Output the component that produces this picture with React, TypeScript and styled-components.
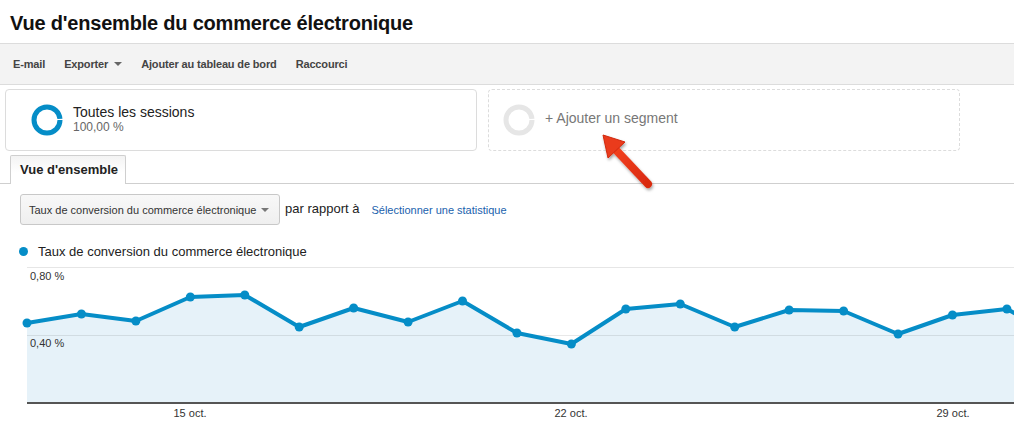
import React from 'react';
import styled, { createGlobalStyle } from 'styled-components';

const GlobalStyle = createGlobalStyle`
    html, body {
        margin: 0;
        padding: 0;
        background: #fff;
        font-family: 'Liberation Sans', Arial, sans-serif;
        color: #222;
    }
`;

const Page = styled.div`
    position: relative;
    width: 1014px;
    height: 424px;
    overflow: hidden;
`;

const Title = styled.h1`
    margin: 0;
    height: 43px;
    box-sizing: border-box;
    padding: 11px 0 0 10px;
    font-size: 20px;
    line-height: 24px;
    font-weight: bold;
    color: #111;
    letter-spacing: -0.2px;
`;

const Toolbar = styled.div`
    display: flex;
    align-items: center;
    gap: 19px;
    height: 40px;
    padding-left: 13px;
    background: #f3f3f3;
    border-top: 1px solid #dcdcdc;
    border-bottom: 1px solid #dcdcdc;
`;

const ToolItem = styled.span`
    display: flex;
    align-items: center;
    gap: 6px;
    font-size: 11px;
    font-weight: bold;
    letter-spacing: -0.15px;
    color: #444;
`;

const Caret = styled.span<{ $color?: string }>`
    width: 0;
    height: 0;
    border-left: 4px solid transparent;
    border-right: 4px solid transparent;
    border-top: 4px solid ${p => p.$color || '#666'};
`;

const SegmentRow = styled.div`
    display: flex;
    gap: 11px;
    margin: 4px 0 0 5px;
`;

const SegmentCard = styled.div<{ $dashed?: boolean }>`
    display: flex;
    align-items: center;
    box-sizing: border-box;
    width: 472px;
    height: 62px;
    padding-left: ${p => (p.$dashed ? '14px' : '25px')};
    gap: 10px;
    border: 1px ${p => (p.$dashed ? 'dashed' : 'solid')} #dcdcdc;
    border-radius: 4px;
`;

const SegmentText = styled.div`
    display: flex;
    flex-direction: column;
    margin-bottom: 3px;
`;

const SegmentName = styled.span`
    font-size: 14px;
    line-height: 16px;
    color: #222;
`;

const SegmentPct = styled.span`
    font-size: 12px;
    line-height: 14px;
    color: #666;
`;

const AddSegment = styled.span`
    font-size: 14px;
    color: #777;
    margin-bottom: 5px;
`;

const TabBar = styled.div`
    display: flex;
    margin-top: 4px;
    padding-left: 10px;
    border-bottom: 1px solid #cfcfcf;
`;

const Tab = styled.div`
    box-sizing: border-box;
    width: 116px;
    height: 29px;
    margin-bottom: -1px;
    padding: 6px 0 0 9px;
    border: 1px solid #cfcfcf;
    border-bottom: none;
    border-radius: 2px 2px 0 0;
    background: linear-gradient(#f3f3f3, #fff 60%);
    font-size: 13px;
    font-weight: bold;
    color: #222;
`;

const Controls = styled.div`
    display: flex;
    align-items: center;
    margin: 10px 0 0 20px;
`;

const Select = styled.div`
    display: flex;
    align-items: center;
    justify-content: space-between;
    box-sizing: border-box;
    width: 260px;
    height: 31px;
    padding: 0 10px 0 8px;
    border: 1px solid #c8c8c8;
    border-radius: 3px;
    background: linear-gradient(#f8f8f8, #efefef);
    font-size: 11px;
    color: #333;
`;

const Versus = styled.span`
    margin-left: 5px;
    font-size: 13px;
    color: #222;
    margin-bottom: 2px;
`;

const MetricLink = styled.a`
    margin-left: 12px;
    font-size: 11px;
    color: #1a5fad;
    text-decoration: none;
    cursor: pointer;
`;

const Legend = styled.div`
    display: flex;
    align-items: center;
    gap: 10px;
    height: 16px;
    margin: 18px 0 0 19px;
    font-size: 13px;
    color: #222;
`;

const LegendDot = styled.span`
    width: 9px;
    height: 9px;
    border-radius: 50%;
    background: #058dc7;
`;

const ChartSvg = styled.svg`
    display: block;
    font-family: 'Liberation Sans', Arial, sans-serif;
`;

const ArrowOverlay = styled.svg`
    position: absolute;
    left: 590px;
    top: 125px;
    overflow: visible;
`;

const Ring: React.FC<{ color: string }> = ({ color }) => (
    <svg width="32" height="32" viewBox="0 0 32 32">
        <circle cx="16" cy="16" r="13" fill="none" stroke={color} strokeWidth="5" strokeDasharray="80 1.7" />
    </svg>
);

const values = [324, 315, 322, 298, 296, 328, 309, 323, 302, 334, 345, 310, 305, 328, 311, 312, 335, 316, 310, 340];
const TOP = 260;
const STEP = 54.44;
const X0 = 27;

const Chart: React.FC = () => {
    const pts = values.map((v, i) => [X0 + i * STEP, v - TOP]);
    const line = pts.map(p => p.join(',')).join(' ');
    const area = `${X0},143 ${line} ${pts[pts.length - 1][0]},143`;
    return (
        <ChartSvg width="1014" height="164" viewBox="0 0 1014 164">
            <polygon points={area} fill="#e6f2f9" />
            <line x1={X0} y1="8.5" x2="1014" y2="8.5" stroke="#e6e6e6" />
            <line x1={X0} y1="76.5" x2="1014" y2="76.5" stroke="rgba(0,0,0,0.09)" />
            <rect x={X0} y="143" width={1014 - X0} height="2" fill="#555" />
            <text x="30" y="21" fontSize="11" fill="#333">0,80 %</text>
            <text x="30" y="88" fontSize="11" fill="#333">0,40 %</text>
            <polyline points={line} fill="none" stroke="#058dc7" strokeWidth="4" strokeLinejoin="round" />
            {pts.map(([x, y], i) => (
                <circle key={i} cx={x} cy={y} r="4.5" fill="#058dc7" />
            ))}
            <text x="190" y="158" fontSize="11" fill="#333" textAnchor="middle">15 oct.</text>
            <text x="571" y="158" fontSize="11" fill="#333" textAnchor="middle">22 oct.</text>
            <text x="953" y="158" fontSize="11" fill="#333" textAnchor="middle">29 oct.</text>
        </ChartSvg>
    );
};

const Arrow: React.FC = () => (
    <ArrowOverlay width="70" height="70" viewBox="590 125 70 70">
        <defs>
            <filter id="arrowShadow" x="-30%" y="-30%" width="160%" height="160%">
                <feDropShadow dx="1" dy="2" stdDeviation="1.5" floodColor="#000" floodOpacity="0.35" />
            </filter>
            <linearGradient id="arrowFill" x1="0" y1="0" x2="1" y2="1">
                <stop offset="0" stopColor="#f2401f" />
                <stop offset="1" stopColor="#d92a10" />
            </linearGradient>
        </defs>
        <g filter="url(#arrowShadow)">
            <line x1="616" y1="150" x2="648" y2="184" stroke="url(#arrowFill)" strokeWidth="8" strokeLinecap="round" />
            <polygon points="603,135 625,142 608,158" fill="#ea3a1c" stroke="#d0290f" strokeWidth="1" strokeLinejoin="round" />
        </g>
    </ArrowOverlay>
);

const App: React.FC = () => (
    <Page>
        <GlobalStyle />
        <Title>Vue d'ensemble du commerce électronique</Title>
        <Toolbar>
            <ToolItem>E-mail</ToolItem>
            <ToolItem>
                Exporter <Caret />
            </ToolItem>
            <ToolItem>Ajouter au tableau de bord</ToolItem>
            <ToolItem>Raccourci</ToolItem>
        </Toolbar>
        <SegmentRow>
            <SegmentCard>
                <Ring color="#058dc7" />
                <SegmentText>
                    <SegmentName>Toutes les sessions</SegmentName>
                    <SegmentPct>100,00 %</SegmentPct>
                </SegmentText>
            </SegmentCard>
            <SegmentCard $dashed>
                <Ring color="#e6e6e6" />
                <AddSegment>+ Ajouter un segment</AddSegment>
            </SegmentCard>
        </SegmentRow>
        <TabBar>
            <Tab>Vue d'ensemble</Tab>
        </TabBar>
        <Controls>
            <Select>
                Taux de conversion du commerce électronique
                <Caret $color="#777" />
            </Select>
            <Versus>par rapport à</Versus>
            <MetricLink>Sélectionner une statistique</MetricLink>
        </Controls>
        <Legend>
            <LegendDot />
            Taux de conversion du commerce électronique
        </Legend>
        <Chart />
        <Arrow />
    </Page>
);

export default App;
